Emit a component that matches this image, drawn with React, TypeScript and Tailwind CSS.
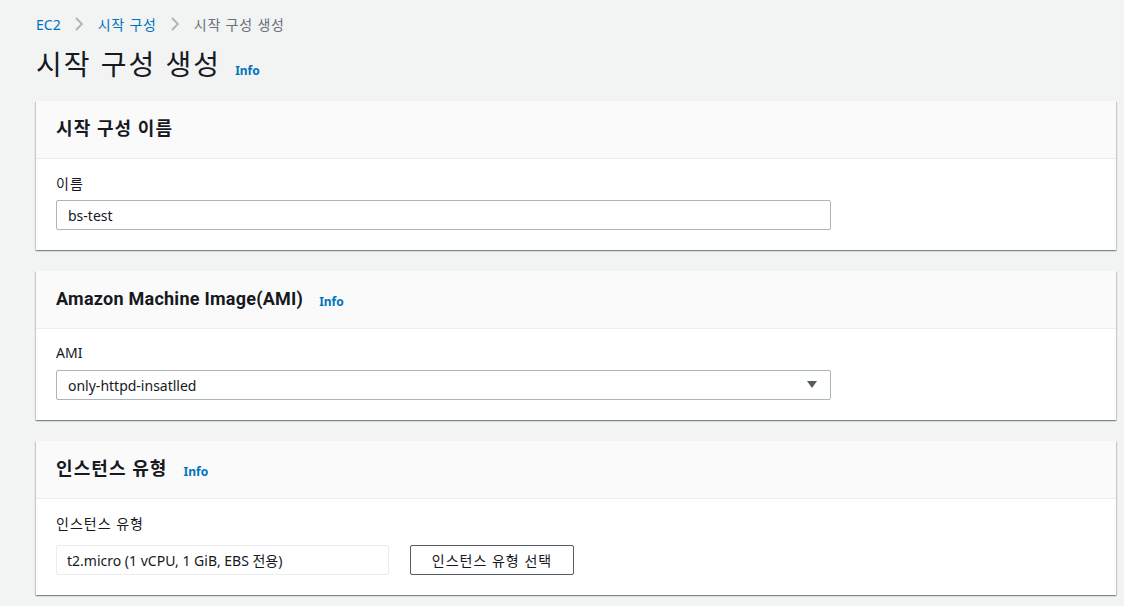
import React from 'react';

const font = { fontFamily: '"Noto Sans", "Noto Sans CJK KR", sans-serif' };
const headFont = { fontFamily: 'Roboto, "Noto Sans CJK KR", sans-serif' };

const Info = () => (
  <span className="text-[12px] font-bold text-[#0073bb] leading-none">Info</span>
);

const Card: React.FC<{ title: string; info?: boolean; korean?: boolean; children: React.ReactNode; bodyClass: string }> = ({
  title,
  info,
  korean,
  children,
  bodyClass,
}) => (
  <div className="bg-white shadow-[0_1px_1px_0_rgba(0,28,36,0.3),1px_1px_1px_0_rgba(0,28,36,0.15),-1px_1px_1px_0_rgba(0,28,36,0.15)]">
    <div className="h-[58px] bg-[#fafafa] border-b border-[#eaeded] flex items-center px-5 gap-4">
      <h2
        className={`text-[18px] font-bold text-[#16191f] pb-[2px] ${korean ? 'tracking-[1.1px]' : 'tracking-[0.25px]'}`}
        style={headFont}
      >
        {title}
      </h2>
      {info && <span className="pt-[1px]"><Info /></span>}
    </div>
    <div className={`px-5 ${bodyClass}`}>{children}</div>
  </div>
);

const Chevron = () => (
  <svg className="ml-[13px] mr-[14px]" width="10" height="14" viewBox="0 0 10 14">
    <path d="M2 1l6 6-6 6" fill="none" stroke="#aab7b8" strokeWidth="1.8" />
  </svg>
);

export default function App() {
  return (
    <div className="min-h-screen bg-[#f2f3f3] pl-[36px] pr-[8px] pt-[13px]" style={font}>
      <nav className="flex items-center text-[14px] h-[22px]">
        <span className="text-[#0073bb]">EC2</span>
        <Chevron />
        <span className="text-[#0073bb] tracking-[0.8px]">시작 구성</span>
        <Chevron />
        <span className="text-[#687078] tracking-[0.8px]">시작 구성 생성</span>
      </nav>
      <div className="flex items-end gap-[14px] mt-[9px] h-[40px]">
        <h1 className="text-[28px] leading-[40px] text-[#16191f] tracking-[2px]">시작 구성 생성</h1>
        <span className="pb-[3px]"><Info /></span>
      </div>

      <div className="mt-[17px] flex flex-col gap-[21px] pb-[12px]">
        <Card title="시작 구성 이름" korean bodyClass="pt-[14px] pb-[20px]">
          <div className="text-[14px] leading-[22px] text-[#16191f] tracking-[1px]">이름</div>
          <div className="mt-[5px] w-[775px] h-[30px] border border-[#aab7b8] rounded-[2px] flex items-center px-[11px] text-[14px] text-[#16191f]">
            bs-test
          </div>
        </Card>

        <Card title="Amazon Machine Image(AMI)" info bodyClass="pt-[13px] pb-[20px]">
          <div className="text-[14px] leading-[22px] text-[#16191f]">AMI</div>
          <div className="mt-[6px] w-[775px] h-[30px] border border-[#aab7b8] rounded-[2px] flex items-center justify-between pl-[11px] pr-[12px] text-[14px] text-[#16191f]">
            <span>only-httpd-insatlled</span>
            <svg width="12" height="10" viewBox="0 0 12 10">
              <path d="M1 1h10L6 8z" fill="#545b64" />
            </svg>
          </div>
        </Card>

        <Card title="인스턴스 유형" info korean bodyClass="pt-[14px] pb-[20px]">
          <div className="text-[14px] leading-[22px] text-[#16191f] tracking-[1px]">인스턴스 유형</div>
          <div className="mt-[10px] flex items-center gap-[21px]">
            <div className="w-[333px] h-[30px] border border-[#eaeded] rounded-[2px] flex items-center px-[10px] text-[14px] text-[#16191f]">
              t2.micro (1 vCPU, 1 GiB, EBS 전용)
            </div>
            <button className="w-[164px] h-[30px] border border-[#545b64] rounded-[2px] bg-white text-[14px] text-[#16191f] tracking-[1px]">
              인스턴스 유형 선택
            </button>
          </div>
        </Card>
      </div>
    </div>
  );
}
